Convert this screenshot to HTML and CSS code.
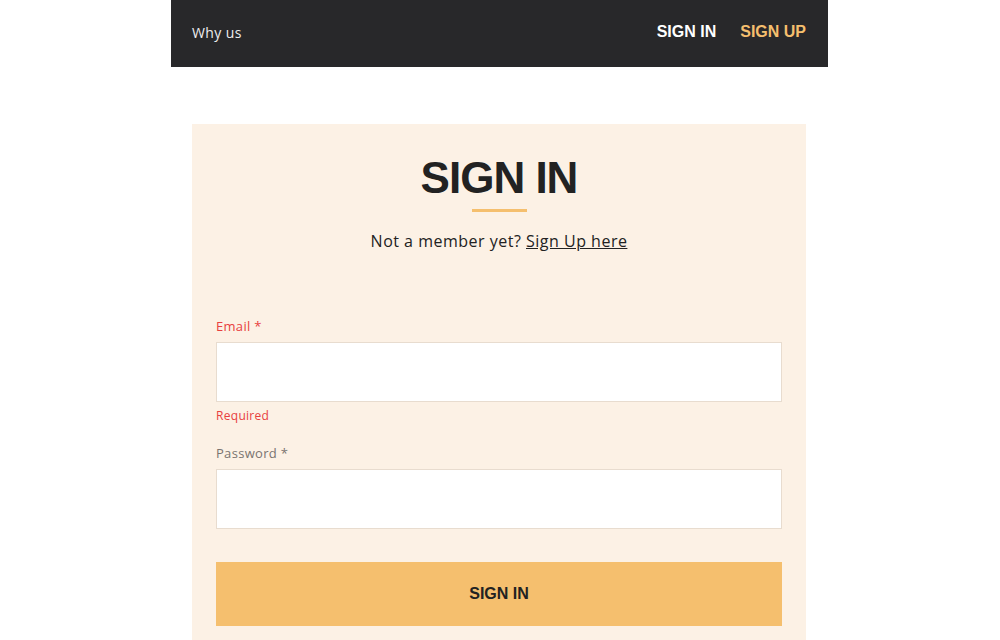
FILE: index.html
```html
<!DOCTYPE html>
<html>
<head>
    <title>Sign in</title>
    <link rel="stylesheet" href="styles.css">
</head>
<body>
    <div class="page">
        <header class="topbar">
            <a class="nav-link" href="#">Why us</a>
            <nav class="auth-links">
                <a class="auth-link" href="#">SIGN IN</a>
                <a class="auth-link signup" href="#">SIGN UP</a>
            </nav>
        </header>

        <main class="card">
            <h1 class="title">SIGN IN</h1>
            <div class="title-bar"></div>
            <p class="subtitle">Not a member yet? <a href="#">Sign Up here</a></p>

            <form class="form">
                <div class="field">
                    <label class="label error" for="email">Email *</label>
                    <input class="input" id="email" type="email">
                    <span class="hint">Required</span>
                </div>
                <div class="field">
                    <label class="label" for="password">Password *</label>
                    <input class="input" id="password" type="password">
                </div>
                <button class="submit" type="button">SIGN IN</button>
            </form>
        </main>
    </div>
</body>
</html>
```

FILE: styles.css
```css
body {
    margin: 0;
    background: #fff;
    font-family: "Open Sans", sans-serif;
    color: #222;
}
.page {
    width: 657px;
    margin: 0 auto;
    padding-right: 1px;
}
.topbar {
    height: 67px;
    box-sizing: border-box;
    background-color: #28282a;
    display: flex;
    align-items: center;
    justify-content: space-between;
    padding: 0 22px 3px 21px;
}
.nav-link {
    color: #eee;
    font-size: 14px;
    letter-spacing: 0.4px;
    text-decoration: none;
}
.auth-links {
    display: flex;
    gap: 24px;
}
.auth-link {
    font-family: "Liberation Sans", Arial, sans-serif;
    font-weight: bold;
    font-size: 16px;
    color: #fff;
    text-decoration: none;
}
.auth-link.signup {
    color: #f5bf6e;
}
.card {
    margin: 57px 22px 0 21px;
    background-color: #fcf1e5;
    padding: 28px 24px 24px;
    text-align: center;
}
.title {
    margin: 0;
    font-family: "Liberation Sans", Arial, sans-serif;
    font-size: 44px;
    line-height: 52px;
    letter-spacing: -1px;
    color: #222;
}
.title-bar {
    width: 55px;
    height: 3px;
    background-color: #f5bf6e;
    margin: 5px auto 0;
}
.subtitle {
    margin: 18px 0 0;
    font-size: 16px;
    letter-spacing: 0.5px;
    color: #222;
}
.subtitle a {
    color: #222;
}
.form {
    margin-top: 65px;
    text-align: left;
}
.field {
    display: flex;
    flex-direction: column;
    margin-bottom: 18px;
}
.label {
    font-size: 13px;
    letter-spacing: 0.3px;
    color: #7a7470;
    margin-bottom: 7px;
}
.label.error {
    color: #e84040;
}
.input {
    height: 60px;
    box-sizing: border-box;
    border: 1px solid #e8dccf;
    background: #fff;
    font-size: 16px;
    padding: 0 12px;
}
.hint {
    font-size: 12px;
    letter-spacing: 0.3px;
    color: #e84040;
    margin: 5px 0 2px;
}
.submit {
    width: 100%;
    height: 64px;
    border: none;
    margin-top: 15px;
    background-color: #f5bf6e;
    font-family: "Liberation Sans", Arial, sans-serif;
    font-weight: bold;
    font-size: 16px;
    color: #222;
    cursor: pointer;
}
```
